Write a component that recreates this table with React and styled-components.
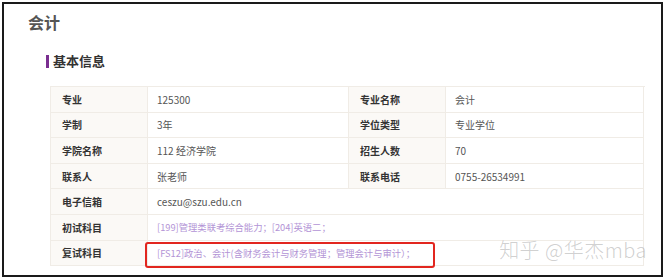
import React from "react";
import styled, { createGlobalStyle } from "styled-components";

const GlobalStyle = createGlobalStyle`
  html, body {
    margin: 0;
    padding: 0;
    background: #fff;
  }
  body {
    font-family: "Noto Sans CJK SC", "Noto Sans", sans-serif;
  }
`;

const Frame = styled.div`
  position: relative;
  box-sizing: border-box;
  margin: 2px 0 0 2px;
  width: 661px;
  height: 275px;
  border: 2px solid #1a1a1a;
  background: #fff;
  overflow: hidden;
  padding: 7px 0 0 24px;
`;

const Title = styled.div`
  font-size: 16px;
  line-height: 22px;
  font-weight: 700;
  color: #555;
`;

const Section = styled.div`
  display: flex;
  align-items: center;
  gap: 4px;
  margin: 19px 0 0 18px;
  font-size: 13px;
  line-height: 18px;
  font-weight: 700;
  color: #333;

  &::before {
    content: "";
    display: block;
    width: 3px;
    height: 13px;
    background: #7a2e90;
  }
`;

const Table = styled.div`
  display: grid;
  grid-template-columns: 97px 201px 97px 198px;
  grid-auto-rows: 25.6px;
  width: 594px;
  margin: 16px 0 0 22px;
  border-top: 1px solid #f0ece6;
  border-left: 1px solid #f0ece6;
`;

const Cell = styled.div`
  position: relative;
  box-sizing: border-box;
  display: flex;
  align-items: center;
  padding-left: ${({ $label }) => ($label ? "11px" : "9px")};
  grid-column: ${({ $span }) => ($span ? `span ${$span}` : "auto")};
  border-right: 1px solid #f0ece6;
  border-bottom: 1px solid #f0ece6;
  background: ${({ $label }) => ($label ? "#fbf9f6" : "#fff")};
  font-size: ${({ $link }) => ($link ? "9.3px" : "10px")};
  font-weight: ${({ $label }) => ($label ? 700 : 400)};
  color: ${({ $label, $link }) => ($label ? "#333" : $link ? "#b394d6" : "#555")};
  white-space: nowrap;
`;

const Highlight = styled.span`
  position: absolute;
  left: -3px;
  top: 1px;
  bottom: -3px;
  width: 290px;
  box-sizing: border-box;
  border: 2px solid #e2261f;
  border-radius: 3px;
  pointer-events: none;
`;

const Watermark = styled.div`
  position: absolute;
  right: 14px;
  bottom: 11px;
  font-size: 20px;
  font-weight: 300;
  letter-spacing: 0.5px;
  color: rgba(150, 150, 150, 0.45);
  white-space: nowrap;
`;

const rows = [
  ["专业", "125300", "专业名称", "会计"],
  ["学制", "3年", "学位类型", "专业学位"],
  ["学院名称", "112 经济学院", "招生人数", "70"],
  ["联系人", "张老师", "联系电话", "0755-26534991"],
];

export default function App() {
  return (
    <>
      <GlobalStyle />
      <Frame>
        <Title>会计</Title>
        <Section>基本信息</Section>
        <Table>
          {rows.map((r) => (
            <React.Fragment key={r[0]}>
              <Cell $label>{r[0]}</Cell>
              <Cell>{r[1]}</Cell>
              <Cell $label>{r[2]}</Cell>
              <Cell>{r[3]}</Cell>
            </React.Fragment>
          ))}
          <Cell $label>电子信箱</Cell>
          <Cell $span={3}>ceszu@szu.edu.cn</Cell>
          <Cell $label>初试科目</Cell>
          <Cell $span={3} $link>
            [199]管理类联考综合能力；[204]英语二；
          </Cell>
          <Cell $label>复试科目</Cell>
          <Cell $span={3} $link>
            [FS12]政治、会计(含财务会计与财务管理；管理会计与审计）；
            <Highlight />
          </Cell>
        </Table>
        <Watermark>知乎 @华杰mba</Watermark>
      </Frame>
    </>
  );
}
